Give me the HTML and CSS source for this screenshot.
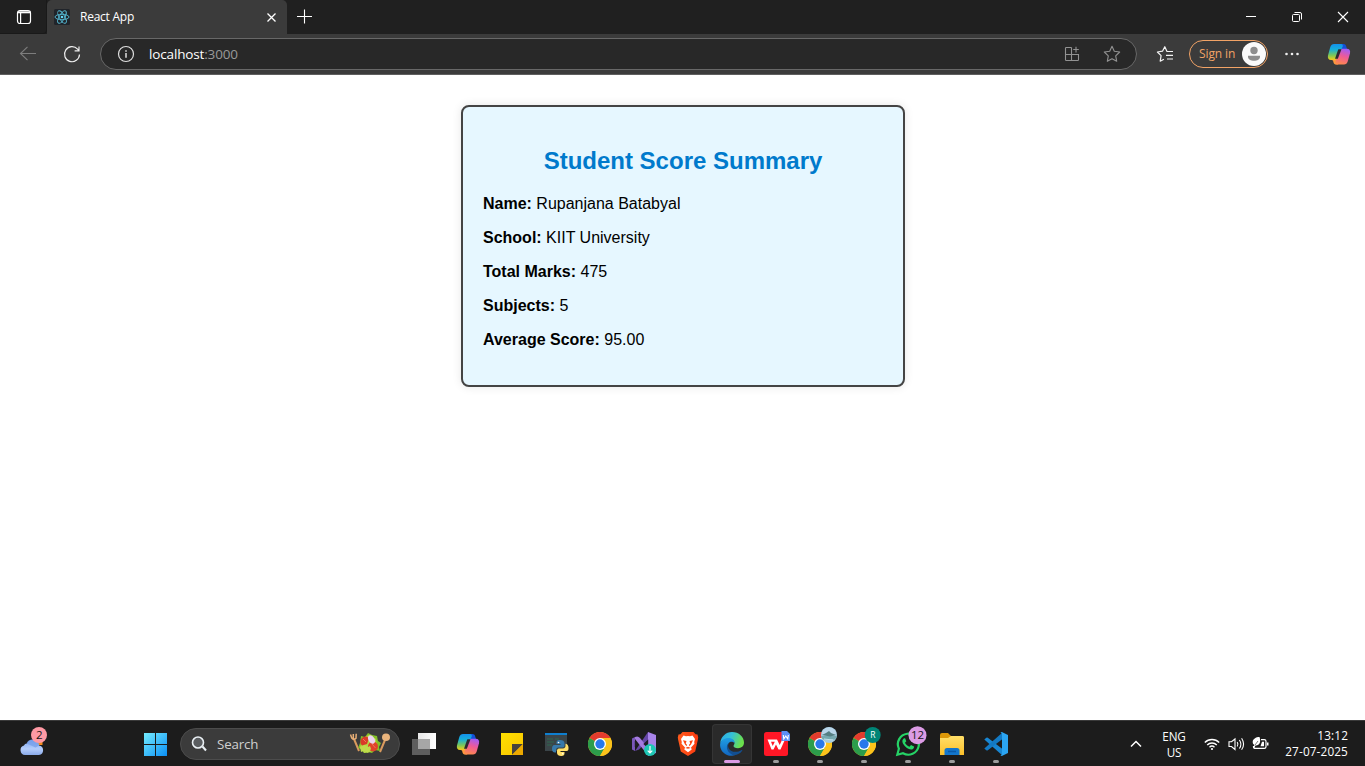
FILE: index.html
```html
<!DOCTYPE html>
<html lang="en">
<head>
<meta charset="utf-8">
<title>React App</title>
<link rel="stylesheet" href="styles.css">
</head>
<body>
<svg class="defs" width="0" height="0">
  <defs>
    <linearGradient id="cpBlue" x1="0" y1="0" x2="0" y2="1"><stop offset="0" stop-color="#1391ee"/><stop offset=".35" stop-color="#18b0d8"/><stop offset=".7" stop-color="#7ac65a"/><stop offset="1" stop-color="#f5cf16"/></linearGradient>
    <linearGradient id="cpPink" x1=".6" y1="0" x2=".3" y2="1"><stop offset="0" stop-color="#a45cf2"/><stop offset=".45" stop-color="#ee5a98"/><stop offset="1" stop-color="#ff8a4a"/></linearGradient>
    <linearGradient id="win" x1="0" y1="0" x2="1" y2="1"><stop offset="0" stop-color="#74ecff"/><stop offset="1" stop-color="#0a8ff5"/></linearGradient>
    <linearGradient id="cloud" x1="0" y1="0" x2="0" y2="1"><stop offset="0" stop-color="#7fa5ee"/><stop offset=".6" stop-color="#b4cdfb"/><stop offset="1" stop-color="#89a9e8"/></linearGradient>
    <linearGradient id="edgeTop" x1="0" y1="0" x2="1" y2=".3"><stop offset="0" stop-color="#2aa9e8"/><stop offset=".5" stop-color="#35c1d8"/><stop offset="1" stop-color="#6be04c"/></linearGradient>
    <linearGradient id="edgeBody" x1="0" y1="0" x2="0" y2="1"><stop offset="0" stop-color="#1f9ee4"/><stop offset="1" stop-color="#1266c0"/></linearGradient>
    <linearGradient id="folder" x1="0" y1="0" x2="0" y2="1"><stop offset="0" stop-color="#ffdf69"/><stop offset="1" stop-color="#fcc02a"/></linearGradient>
    <linearGradient id="sticky" x1="0" y1="0" x2="1" y2="1"><stop offset="0" stop-color="#ffe000"/><stop offset="1" stop-color="#f8c400"/></linearGradient>
    <linearGradient id="brave" x1="0" y1="0" x2="1" y2="0"><stop offset="0" stop-color="#ff5a1c"/><stop offset="1" stop-color="#fb3a10"/></linearGradient>
    <linearGradient id="tv"><stop stop-color="#e8e8e8"/><stop offset="1" stop-color="#fff"/></linearGradient>
    <symbol id="copilot" viewBox="0 0 24 22">
      <path d="M12 1h4.600c1.200 0 2 .7 2.400 1.800l1.200 3.700h-4c-1.200 0-1.900.6-2.200 1.700L11 6z" fill="#1450d8"/>
      <path d="M7 1h7.200c1.300 0 1.900 1 1.500 2.200L11.200 15c-.5 1.300-1.300 2-2.600 2H4.200C1.500 17 .4 15 1 12.500L3.300 4C3.900 2 5.200 1 7 1z" fill="url(#cpBlue)"/>
      <path d="M4 16.800h5c1.200 0 2-.6 2.400-1.800l1.800 4L11 21.500H9c-1.200 0-2-.7-2.400-1.800L6 17.600z" fill="#ff9c3c"/>
      <path d="M17 21.500H9.800c-1.300 0-1.900-1-1.500-2.200L12.600 7.800c.5-1.300 1.400-2 2.700-2h4.500c2.700 0 3.800 2 3.200 4.500l-2.300 8.200c-.6 2-1.900 3-3.700 3z" fill="url(#cpPink)"/>
      <path d="M11.300 6.200h3.200l-3.700 9.500H8z" fill="#2d2930"/>
    </symbol>
    <symbol id="chrome" viewBox="0 0 24 24">
      <circle cx="12" cy="12" r="12" fill="#fbc116"/>
      <path d="M12 12 1.600 6A12 12 0 0 1 22.400 6z" fill="#e33b2e"/>
      <path d="M12 12 1.600 6A12 12 0 0 0 12 24l5.200-9z" fill="#2c9d4b"/>
      <path d="M12 6h10.400A12 12 0 0 1 12 24l5.200-9z" fill="#fcc31b"/>
      <circle cx="12" cy="12" r="6" fill="#fff"/><circle cx="12" cy="12" r="4.700" fill="#2878eb"/>
    </symbol>
  </defs>
</svg>

<header class="titlebar">
  <div class="tab-actions"><svg width="16" height="16" viewBox="0 0 16 16" fill="none" stroke="#fff" stroke-width="1.200"><rect x="1.500" y="1.500" width="13" height="13" rx="2.500"/><path d="M2 3.300h12.400" stroke-width="2"/><path d="M4.600 4v10"/></svg></div>
  <div class="tab">
    <svg class="favicon" width="16" height="16" viewBox="0 0 16 16"><rect width="16" height="16" rx="1.500" fill="#20242a"/><g fill="none" stroke="#55b9d3" stroke-width=".9"><ellipse cx="8" cy="8" rx="7" ry="2.700"/><ellipse cx="8" cy="8" rx="7" ry="2.700" transform="rotate(60 8 8)"/><ellipse cx="8" cy="8" rx="7" ry="2.700" transform="rotate(120 8 8)"/></g><circle cx="8" cy="8" r="1.300" fill="#61dafb"/></svg>
    <span class="tab-title">React App</span>
    <svg class="tab-close" width="10" height="10" viewBox="0 0 10 10" stroke="#fff" stroke-width="1.300"><path d="m1.500 1.500 8 8M9.500 1.500l-8 8"/></svg>
  </div>
  <svg class="new-tab" width="14" height="14" viewBox="0 0 14 14" stroke="#fff" stroke-width="1.100"><path d="M0 7.500h15M7.500 .5v14"/></svg>
  <div class="window-buttons">
    <svg width="12" height="12" viewBox="0 0 12 12" stroke="#fff"><path d="M1 5.500h10"/></svg>
    <svg width="12" height="12" viewBox="0 0 12 12" fill="none" stroke="#fff"><rect x="1.500" y="3.500" width="7" height="7" rx="1"/><path d="M3.500 1.500h5.500a1.500 1.500 0 0 1 1.500 1.500v5.500"/></svg>
    <svg width="12" height="12" viewBox="0 0 12 12" stroke="#fff" stroke-width="1.100"><path d="m1 1 10 10M11 1 1 11"/></svg>
  </div>
</header>

<nav class="toolbar">
  <svg class="back" width="18" height="16" viewBox="0 0 18 16" fill="none" stroke="#7d7d7d" stroke-width="1.100"><path d="M17 7.500H1.500M8.500 .8 1.500 7.500l7 6.700"/></svg>
  <svg class="reload" width="18" height="18" viewBox="0 0 18 18" fill="none" stroke="#ededed" stroke-width="1.200"><path d="M16.500 9.500A7.500 7.500 0 1 1 14.600 4.200L16 5.700M16 1.500v4.300h-4.400"/></svg>
  <div class="address">
    <svg width="18" height="18" viewBox="0 0 18 18" fill="none" stroke="#dedede" stroke-width="1.200"><circle cx="9" cy="9" r="7.500"/><path d="M9 8v4.800M9 5.200v1.500" stroke-width="1.500"/></svg>
    <span class="url">localhost<span class="port">:3000</span></span>
    <svg class="app-icon" width="16" height="16" viewBox="0 0 16 16" fill="none" stroke="#929292" stroke-width="1.100"><path d="M7.500 1.500H2.300a.8.800 0 0 0-.8.800v11.400c0 .5.300.8.800.8h11.400c.5 0 .8-.3.800-.8V8.500h-13M7.500 1.500v13M12 .8v5.700M9.200 3.500h5.600"/></svg>
    <svg class="star" width="18" height="18" viewBox="0 0 18 18" fill="none" stroke="#929292" stroke-width="1.100" stroke-linejoin="round"><path d="m9 1.300 2.300 5 5.400.7-4 3.800 1 5.500L9 13.700l-4.700 2.600 1-5.500-4-3.800 5.400-.7z"/></svg>
  </div>
  <svg class="favorites" width="18" height="18" viewBox="0 0 18 18" fill="none" stroke="#f4f4f4" stroke-width="1.200" stroke-linejoin="round"><path d="M17 6.500h-6L8.800 1.700 6.500 6.200l-5.100.8 3.700 3.700-.9 5.500 3.700-2M10 10.300h7M11 14h6"/></svg>
  <div class="sign-in"><span>Sign in</span><svg width="24" height="24" viewBox="0 0 24 24"><circle cx="12" cy="12" r="12" fill="#fafafa"/><circle cx="12" cy="8.500" r="3.700" fill="#8d8d8d"/><path d="M6 13.800h12v1.200c0 2.400-2.800 3.800-6 3.800s-6-1.400-6-3.800z" fill="#8d8d8d"/></svg></div>
  <svg class="more" width="14" height="4" viewBox="0 0 14 4" fill="#eee"><circle cx="1.500" cy="2" r="1.300"/><circle cx="7" cy="2" r="1.300"/><circle cx="12.500" cy="2" r="1.300"/></svg>
  <svg class="copilot" width="24" height="22"><use href="#copilot"/></svg>
</nav>

<main class="page">
  <section class="card">
    <h2>Student Score Summary</h2>
    <p><b>Name:</b> Rupanjana Batabyal</p>
    <p><b>School:</b> KIIT University</p>
    <p><b>Total Marks:</b> 475</p>
    <p><b>Subjects:</b> 5</p>
    <p><b>Average Score:</b> 95.00</p>
  </section>
</main>

<footer class="taskbar">
  <div class="weather"><svg width="30" height="30" viewBox="0 0 30 30"><path d="M17 14h5.500v4H17z" fill="#f28a1c"/><path d="M5 28a4.800 4.800 0 0 1-1-9.400A3 3 0 0 1 7 16.500 6.300 6.300 0 0 1 19 18.500a4.800 4.800 0 0 1 0 9.500z" fill="url(#cloud)"/><path d="M6.500 16.600A6.500 6.500 0 0 1 19 18.500l-3.500 2z" fill="#749ce8" opacity=".7"/><circle cx="19" cy="8" r="8" fill="#ff99a4"/><text class="badge-text" x="19.300" y="12">2</text></svg></div>
  <svg class="start" width="24" height="24" viewBox="0 0 24 24" fill="url(#win)"><path d="M1 1H12V12H1zM13 1H24V12H13zM1 13H12V24H1zM13 13H24V24H13z"/></svg>
  <div class="search">
    <svg width="16" height="16" viewBox="0 0 16 16" fill="#5a5d60"><path d="m10.500 10.500 3.500 4" stroke="#eaf0f4" stroke-width="2"/><circle cx="6" cy="6.500" r="5.500" stroke="#eaf0f4" stroke-width="1.600"/></svg>
    <span>Search</span>
    <svg class="salad" width="42" height="24" viewBox="0 0 42 24">
      <path d="m5 7 5 12" stroke="#d99a5e" stroke-width="2"/><path d="M1.500 2.500 2.700 6q2 2.500 4.300.3L7.200 1.800M4.300 2v5" stroke="#e8ae76" stroke-width="1.500" fill="none"/><path d="M36 8 31 20" stroke="#d99a5e" stroke-width="2"/><ellipse cx="37" cy="5.300" rx="4" ry="3.800" fill="#eab57d"/>
      <path d="m9 16 2-5 1-7 4 1 3-4 4 2 5 1 1 5 3 2-2 4 1 4-5-1-3 3-4-1-4 1-1-3z" fill="#84bf27"/><path d="m11 15 3-9 6-3 7 4 1 9-7 4-6 1z" fill="#b3d844"/><path d="M13 13.500A5 5 0 1 1 20 6l-2 6z" fill="#d93b28"/><circle cx="24" cy="14.500" r="5" fill="#df422b"/><ellipse cx="22.500" cy="7.500" rx="3" ry="4.500" fill="#ecd3ee" transform="rotate(-30 22.500 7.500)"/><path d="m11 15 5-2 3 2 2-1 1 3-3 4-4-2-3 1z" fill="#c0dc4c"/><path d="m14 7 3 3M23 12l3.500 4" stroke="#ef7456"/>
    </svg>
  </div>
  <div class="apps">
    <div class="app"><svg width="24" height="24" viewBox="0 0 24 24"><path d="M6 1h18v16H6z" fill="url(#tv)"/><path d="M0 7h18v16H0z" fill="#5e5e5e"/><path d="M6 7h12v10H6z" fill="#a6a6a6"/></svg></div>
    <div class="app"><svg width="24" height="22"><use href="#copilot"/></svg></div>
    <div class="app"><svg width="24" height="24" viewBox="0 0 24 24"><path d="M1 1h22v22H1z" fill="url(#sticky)"/><path d="M12 12h11L12 23z" fill="#47423d"/><path d="M23 12v11H12z" fill="#eda900"/></svg></div>
    <div class="app"><svg width="24" height="24" viewBox="0 0 24 24"><path d="M1 1h22v18H1z" fill="#3b4549"/><path d="M1 1h22v2H1z" fill="#0e7fd0"/><path d="M3 7h6M3 10h7M3 13h5M11 7h4" stroke="#2e6950"/><path d="M16 8c-3 0-3.500 1.300-3.500 3v1h4v1h-6C8.500 13 8 15 8 17s1 3.500 3 3.500h1V18c0-1.500 1-2.500 2.500-2.500h4c1 0 2-1 2-2V11c0-2-2-3-4.500-3z" fill="#3779ab"/><path d="M17 24c3 0 3.500-1.300 3.500-3v-1h-4v-1h6c2 0 2-1.500 2-3.500S23 11.800 21.500 11.800V14c0 1.500-1 2.500-2.500 2.500h-4c-1 0-2 1-2 2V21c0 2 2 3 4 3z" fill="#ffde68"/><circle cx="14.500" cy="10.500" r=".8" fill="#fff"/><circle cx="18.700" cy="21.700" r=".8" fill="#fff"/></svg></div>
    <div class="app"><svg width="24" height="24"><use href="#chrome"/></svg></div>
    <div class="app"><svg width="24" height="24" viewBox="0 0 24 24"><path d="m0 6.500 3-1.500v14l-3-1.500z" fill="#7a57bb"/><path d="M3 19 16 0l3 5L7 17.500z" fill="#6546a5"/><path d="M3 5q3-1.500 5 1l10 12.500-2 5L3 7z" fill="#a57be0"/><path d="m16 0 8 3v18l-8 3z" fill="#a884ea"/><path d="m2.800 9 2.700 3-2.700 3zM16.200 7.500v9L11.300 12z" fill="#211d2a"/><circle cx="18" cy="18" r="6" fill="#1ec7b4"/><path d="M18 14v7m-2.300-2.300L18 21l2.300-2.300" stroke="#fff" stroke-width="1.200" fill="none"/></svg></div>
    <div class="app"><svg width="24" height="24" viewBox="0 0 24 24"><path d="M6.500 0h11l2 2.300 2 .2.700 3-.4 2.500-2.600 11.500L12 24l-7.200-4.500L2.200 8l-.4-2.500.7-3 2-.2z" fill="url(#brave)"/><path d="m7.500 3.500 2.500.8 2-.4 2 .4 2.500-.8L19 7l-.8 3 .3 1.800-3.500 3.700.7 1.900L12 20.300l-3.700-2.900.7-1.900-3.500-3.700.3-1.800L5 7z" fill="#fff"/><path d="m7 8.300 3.500.8-.7 2.300 1.200 1.400-.3 1.500L9 12.500zM17 8.300l-3.500.8.700 2.300-1.200 1.400.3 1.500 1.700-1.800zM9.300 16l2.700-1.300 2.700 1.300-2.700.8z" fill="#fb4715"/></svg></div>
    <div class="app active"><svg width="24" height="24" viewBox="0 0 24 24"><path d="M.2 11C1 4.700 5.700 0 12 0c7 0 12 5 12 10.500 0 3.600-2.700 5.700-6 5.700-3 0-4.500-1-4.500-2.200 0-.8 1-1.400 1-3 0-2-2.200-4-5.500-4C5 7 2 8.500.2 11z" fill="url(#edgeTop)"/><path d="M.1 12.500C.3 8.500 4.500 6 8.500 6c4 0 6.300 2.500 6 5.200-.8-1.300-2.700-1.800-4.500-1.200-3 1.700-3.500 6.700 0 10 1.500 1.500 4 3 5.500 2.700C13 24 9 24.400 6 22.500 2 20.300 0 16.500.1 12.500z" fill="url(#edgeBody)"/><path d="M10 10c-2 1.500-2.500 4.300-1.200 6.500 2 3.500 7.700 4.700 13 1.500.5-.2.800.1.500.6-1.700 2.800-4.800 4.600-8.100 4.600C7.500 22 4 13.400 10 10z" fill="#124f91"/></svg></div>
    <div class="app running"><svg width="24" height="24" viewBox="0 0 24 24"><rect width="24" height="24" rx="2.500" fill="#ff1726"/><path d="M3.500 7.500H13l2.700 5.500L18 8h2.800L16.500 17.500h-2L12 12.500l-2.500 5h-2z" fill="#fff"/><path d="M7 9.800h3.800L8.700 14z" fill="#ff1726"/><path d="M17.500-1h5.500l3 3v7h-8.500z" fill="#5b8ff6"/><path d="m19.300 3 .5 4 2-3 2 3 .5-4" fill="none" stroke="#fff" stroke-width="1.100"/></svg></div>
    <div class="app running"><svg width="24" height="24" viewBox="0 0 24 24"><use href="#chrome" width="24" height="24"/><circle cx="21" cy="3" r="8" fill="#a5cbdf"/><path d="M14.500-1.500Q21-8 27.500-1.500L28 2H14z" fill="#b9d6ea"/><path d="M13.200 4h15.600l-1.500 3.500H14.500z" fill="#76a9b0"/><path d="m14 3 4-2 3-2 2 2 5 2-6 1.500z" fill="#557f83"/><path d="m16 7 9 1" stroke="#c3e2ea"/></svg></div>
    <div class="app running"><svg width="24" height="24" viewBox="0 0 24 24"><use href="#chrome" width="24" height="24"/><circle cx="20.700" cy="3" r="8" fill="#008577"/><text class="profile-text" x="20.800" y="6.200">R</text></svg></div>
    <div class="app running"><svg width="24" height="24" viewBox="0 0 24 24"><path d="m1.300 22.700 1.600-6A10.500 10.500 0 1 1 7 21.200z" fill="none" stroke="#25d366" stroke-width="2.200"/><path d="M8.400 6.300C6.200 7 5.800 9.800 7.400 12.300c2.400 3.800 7.300 6.800 9.800 4.400 1-1 1-2 .8-2.200l-3-1.500-1.500 1.700c-2.200-.8-3.700-2.300-4.500-4l1.300-1.500-1.200-2.900z" fill="#25d366"/><circle cx="21.500" cy="3.200" r="9" fill="#dc9be5"/><text class="badge-text" x="21.500" y="7.200">12</text></svg></div>
    <div class="app running"><svg width="24" height="24" viewBox="0 0 24 24"><path d="M0 3q0-2 2-2h6l3 3h11q2 0 2 2v6H0z" fill="#dc9707"/><path d="M0 6h8l3-2h11.500Q24 4 24 5.500V23H0z" fill="url(#folder)"/><path d="M4.500 23v-4.500q0-2.500 2.500-2.500h10q2.500 0 2.500 2.500V23z" fill="#1376cc"/><path d="M8 19.500h8" stroke="#0959a8" stroke-width="1.500"/></svg></div>
    <div class="app running"><svg width="24" height="24" viewBox="0 0 24 24"><path d="M.3 7.500 2.300 5.700q.8-.5 1.500 0L18.500 17v6.500z" fill="#1886d2"/><path d="M.3 16.500 2.300 18.300q.8.500 1.500 0L18.500 7V.5z" fill="#1379c3"/><path d="m17.800 0 6.200 3v18l-6.200 3-1.600-.8q1.800.3 1.800-1.700v-19q0-2-1.800-1.700z" fill="#2ba5f2"/></svg></div>
  </div>
  <div class="tray">
    <svg class="chevron" width="12" height="8" viewBox="0 0 12 8" fill="none" stroke="#fff" stroke-width="1.500"><path d="m1 6.500 5-5 5 5"/></svg>
    <div class="language"><span>ENG</span><span>US</span></div>
    <svg class="wifi" width="16" height="14" viewBox="0 0 16 14" fill="none" stroke="#fff" stroke-width="1.400"><path d="M.8 5.500a10.200 10.200 0 0 1 14.400 0M3.200 8a6.900 6.900 0 0 1 9.600 0M5.500 10.300a3.600 3.600 0 0 1 5 0"/><circle cx="8" cy="12" r="1.100" fill="#fff" stroke="none"/></svg>
    <svg class="volume" width="17" height="16" viewBox="0 0 17 16" fill="none" stroke="#fff" stroke-width="1.100"><path d="M1 5.800h2.500L7 3v10.500l-3.500-3H1zM9.200 6q1.500 2.200 0 4.500M11.400 4q3 4.300 0 8.500M13.600 2.300q4 6 0 11.500"/></svg>
    <svg class="battery" width="17" height="16" viewBox="0 0 17 16"><path d="M9 4.600h3.200q1.800 0 1.800 1.700v5.400q0 1.700-1.800 1.700H3.500M1.500 11v.7q0 1.700 2 1.700" fill="none" stroke="#fff" stroke-width="1.200"/><path d="M15 7.500h1.500v3H15zM8.500 11.300H12v-4.500h-2z" fill="#fff"/><path d="M7.500 2C4 2 .5 4 .7 7.200c.1 1.300.8 2.300 1.800 2.800L1 12.800l1 .4L3.500 10.500C7.500 10.800 9.300 7 7.500 2z" fill="#fff"/><path d="m3 10 3-4" stroke="#555" stroke-width=".8"/></svg>
    <div class="clock"><span>13:12</span><span>27-07-2025</span></div>
  </div>
</footer>
</body>
</html>
```
FILE: styles.css
```css
* { box-sizing: border-box; }
html, body { margin: 0; height: 100%; overflow: hidden; }
body {
  display: flex;
  flex-direction: column;
  background: #fff;
  font-family: "Open Sans", "Noto Sans", sans-serif;
  font-size: 12px;
  color: #fff;
}
svg { display: block; flex: none; overflow: visible; }
.defs { position: absolute; }

.titlebar { display: flex; flex: none; height: 34px; background: #202020; }
.tab-actions { width: 47px; padding: 9px 0 0 16px; border-bottom: 1px solid #191919; border-right: 1px solid #191919; border-bottom-right-radius: 4px; }
.tab { display: flex; align-items: center; width: 240px; padding: 0 11px 0 7px; background: #3b3b3b; border-radius: 5px 5px 0 0; }
.tab-title { margin-left: 10px; padding-bottom: 2px; letter-spacing: -0.25px; }
.tab-close { margin-left: auto; }
.new-tab { margin: 9px 0 0 10px; }
.window-buttons { display: flex; gap: 34px; margin: 11px 16px 0 auto; }

.toolbar { display: flex; flex: none; align-items: center; height: 41px; padding-left: 19px; background: #3b3b3b; border-bottom: 1px solid #5f5f5f; }
.reload { margin-left: 26px; }
.address { display: flex; align-items: center; width: 1037px; height: 32px; margin-left: 19px; padding: 0 15px 0 16px; border: 1px solid #686868; border-radius: 16px; background: #282828; }
.url { margin-left: 14px; font-size: 13.5px; letter-spacing: -0.15px; }
.port { color: #999; }
.app-icon { margin-left: auto; }
.star { margin-left: 23px; }
.favorites { margin-left: 19px; }
.sign-in { display: flex; align-items: center; justify-content: space-between; width: 79px; height: 28px; margin-left: 15px; padding: 0 1px 0 9px; border: 1px solid #f2a366; border-radius: 14px; color: #f2a366; letter-spacing: -0.1px; white-space: nowrap; }
.sign-in span { padding-bottom: 2px; }
.more { margin-left: 17px; }
.copilot { margin-left: 28px; }

.page { flex: 1; padding-top: 30px; font-family: Arial, "Liberation Sans", sans-serif; color: #000; }
.card { width: 444px; height: 282px; margin: 0 auto; padding: 20px; border: 2px solid #444; border-radius: 8px; background: #e6f7ff; box-shadow: 0 0 10px rgba(0, 0, 0, 0.1); }
.card h2 { margin: 20px 0; padding-left: 1px; color: #007acc; font-size: 24px; line-height: 28px; text-align: center; }
.card p { margin: 0 0 16px; padding-left: 0.5px; font-size: 16px; line-height: 18px; }

.taskbar { display: flex; flex: none; height: 46px; padding-top: 3px; background: #1c1c1c; border-top: 1px solid #3a3a3a; }
.weather { width: 143px; padding: 3px 0 0 20px; }
.start { margin-top: 8px; }
.search { display: flex; align-items: center; width: 220px; height: 32px; margin: 4px 4px 0 13px; padding: 0 8px 0 11px; border: 1px solid #4c4c4c; border-radius: 16px; background: #3b3b3b; color: #d0d0d0; font-size: 13.3px; letter-spacing: -0.15px; }
.search span { margin-left: 9px; }
.salad { margin-left: auto; }
.apps { display: flex; gap: 4px; }
.app { position: relative; display: flex; align-items: center; justify-content: center; width: 40px; height: 40px; border-radius: 4px; }
.active { background: #2a2a2a; box-shadow: inset 0 0 0 1px #353535; }
.running::after, .active::after { content: ""; position: absolute; bottom: 1px; left: 17px; width: 6px; height: 3px; border-radius: 2px; background: #9c9c9c; }
.active::after { left: 12px; width: 16px; background: #dc9be5; }
.badge-text { font-size: 11.5px; text-anchor: middle; fill: #171717; }
.profile-text { font-size: 8.5px; text-anchor: middle; fill: #fff; }
.tray { display: flex; flex: none; margin-left: auto; padding-right: 17px; }
.chevron { margin-top: 16px; }
.language { display: flex; flex-direction: column; align-items: center; width: 28px; margin: 4px 0 0 18px; font-size: 11.7px; line-height: 16px; letter-spacing: -0.1px; }
.wifi { margin: 13px 0 0 16px; }
.volume { margin: 12px 0 0 8px; }
.battery { margin: 11px 0 0 7px; }
.clock { display: flex; flex-direction: column; align-items: flex-end; width: 66px; margin: 3px 0 0 13px; font-size: 11.8px; line-height: 16px; letter-spacing: 0.12px; white-space: nowrap; }
```
